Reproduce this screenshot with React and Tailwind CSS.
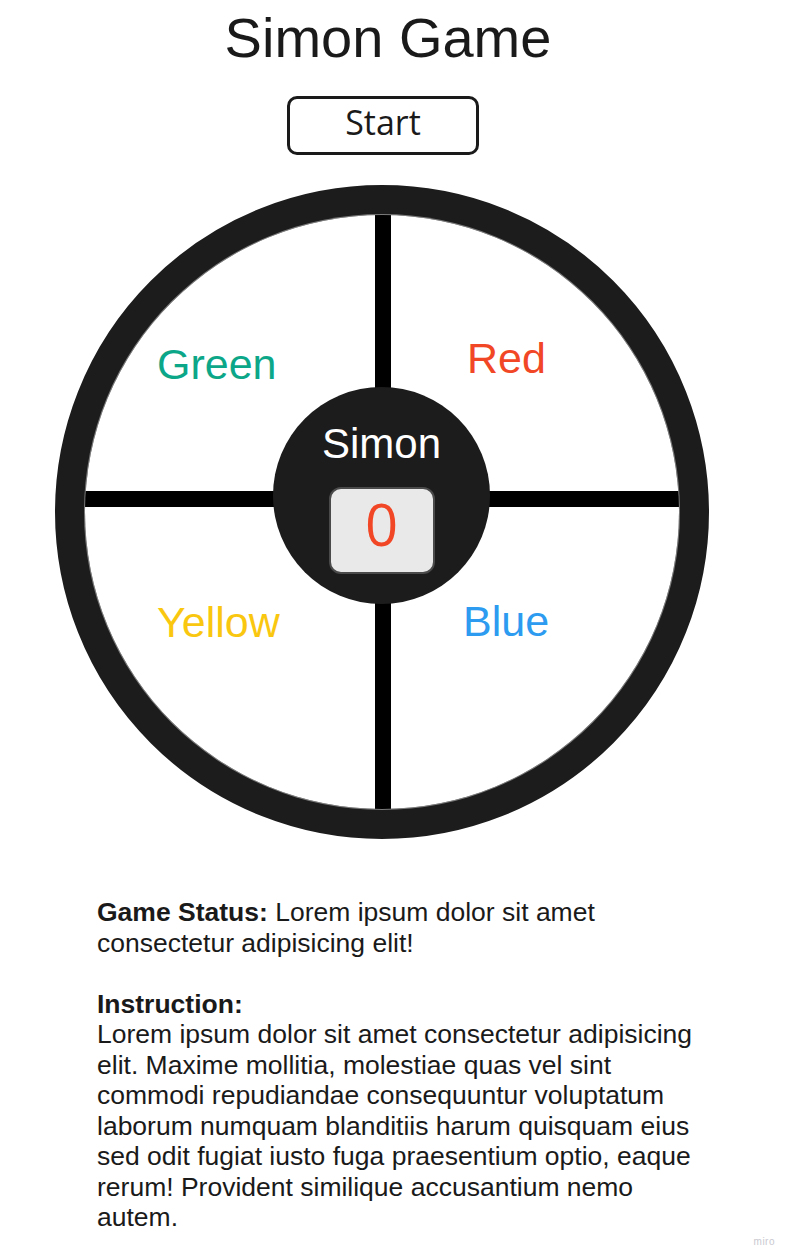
export default function App() {
  const sans = { fontFamily: '"Liberation Sans", Arial, sans-serif' };
  return (
    <div className="relative w-full min-h-[1257px] bg-white text-[#1a1a1a]" style={sans}>
      <div className="ml-[55px] w-[654px] flex flex-col items-center">
        <h1 className="pl-[12px] pt-[6px] text-[56px] leading-[64px] font-normal whitespace-nowrap">Simon Game</h1>
        <button className="mt-[26px] ml-[2px] w-[192px] h-[59px] border-[3px] border-[#1a1a1a] rounded-[10px] bg-white flex items-center justify-center pb-[8px] text-[34px] leading-none text-[#1a1a1a] [font-family:'Open_Sans',sans-serif]">
          Start
        </button>
        <div className="mt-[30px] w-[654px] h-[654px] rounded-full border-[30px] border-[#1c1c1c]">
          <div className="relative w-full h-full rounded-full overflow-hidden bg-black shadow-[0_0_0_1px_#7a7a7a] grid grid-cols-[290px_288px] grid-rows-[276px_302px] gap-[16px]">
            <div className="bg-white pl-[72px] pt-[128px]">
              <span className="block text-[43px] leading-none text-[#0ca789]">Green</span>
            </div>
            <div className="bg-white pl-[76px] pt-[122px]">
              <span className="block text-[43px] leading-none text-[#f24726]">Red</span>
            </div>
            <div className="bg-white pl-[72px] pt-[94px]">
              <span className="block text-[43px] leading-none text-[#fac710]">Yellow</span>
            </div>
            <div className="bg-white pl-[72px] pt-[93px]">
              <span className="block text-[43px] leading-none text-[#2d9bf0]">Blue</span>
            </div>
            <div className="absolute left-[188px] top-[172px] w-[217px] h-[217px] rounded-full bg-[#1c1c1c] flex flex-col items-center pt-[36px]">
              <span className="text-[42px] leading-none text-white">Simon</span>
              <div className="mt-[22px] w-[106px] h-[87px] rounded-[12px] bg-[#e9e9e9] border-2 border-[#4a4a4a] flex items-center justify-center pb-[14px]">
                <span className="text-[58px] leading-none text-[#f24726] [font-family:'Open_Sans',sans-serif]">0</span>
              </div>
            </div>
          </div>
        </div>
        <div className="self-start ml-[42px] mt-[58px] w-[606px] text-[26.5px] leading-[30.5px]">
          <p>
            <b>Game Status:</b>{' '}Lorem ipsum dolor sit amet consectetur adipisicing elit!
          </p>
          <p className="mt-[30.5px]"><b>Instruction:</b></p>
          <p>
            Lorem ipsum dolor sit amet consectetur adipisicing elit. Maxime mollitia, molestiae quas vel sint commodi repudiandae consequuntur voluptatum laborum numquam blanditiis harum quisquam eius sed odit fugiat iusto fuga praesentium optio, eaque rerum! Provident similique accusantium nemo autem.
          </p>
        </div>
      </div>
      <span className="absolute right-[20px] bottom-[10px] text-[10px] leading-none text-[#c9c9d1] tracking-[0.5px]">miro</span>
    </div>
  );
}
